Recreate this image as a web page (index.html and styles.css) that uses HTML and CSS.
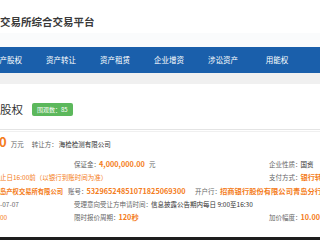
FILE: index.html
```html
<!DOCTYPE html>
<html lang="zh-CN">
<head>
    <meta charset="UTF-8">
    <meta name="viewport" content="width=device-width, initial-scale=1.0">
    <title>交易所综合交易平台</title>
    <link rel="stylesheet" href="styles.css">
</head>
<body>
    <div class="page">
        <header class="top">
            <div class="brand">交易所综合交易平台</div>
        </header>
        <div class="strip"></div>
        <nav class="nav">
            <ul>
                <li>资产股权</li>
                <li>资产转让</li>
                <li>资产租赁</li>
                <li>企业增资</li>
                <li>涉讼资产</li>
                <li>用能权</li>
                <li>更多</li>
            </ul>
        </nav>
        <div class="gap"></div>
        <main class="detail">
            <div class="head">
                <h2>股权</h2>
                <span class="badge">围观数：85</span>
            </div>
            <div class="price-row">
                <span class="amount">0</span>
                <span class="unit">万元</span>
                <span class="k seller-k">转让方：</span>
                <span class="seller">海检检测有限公司</span>
            </div>
            <div class="info">
                <div class="row">
                    <div class="cell-a"></div>
                    <div class="cell-b"><span class="k">保证金：</span><span class="v hot">4,000,000.00</span><span class="k yuan">元</span></div>
                    <div class="cell-c"><span class="k">企业性质：</span><span class="v">国资</span></div>
                </div>
                <div class="row">
                    <div class="cell-ab warn">止日16:00前（以银行到账时间为准）</div>
                    <div class="cell-c"><span class="k">支付方式：</span><span class="v hot">银行转账</span></div>
                </div>
                <div class="row">
                    <div class="acct-name hot">岛产权交易所有限公司</div>
                    <div class="acct-no"><span class="k">账号：</span><span class="v hot">53296524851071825069300</span></div>
                    <div class="bank"><span class="k">开户行：</span><span class="v hot">招商银行股份有限公司青岛分行</span></div>
                </div>
                <div class="row">
                    <div class="cell-a muted">-07-07</div>
                    <div class="cell-bc"><span class="k">受理意向受让方申请时间：</span><span class="v">信息披露公告期内每日 9:00至16:30</span></div>
                </div>
                <div class="row">
                    <div class="cell-a warn">00</div>
                    <div class="cell-b"><span class="k">限时报价周期：</span><span class="v hot">120秒</span></div>
                    <div class="cell-c"><span class="k">加价幅度：</span><span class="v hot">10.00</span></div>
                </div>
            </div>
        </main>
        <div class="bottom-bar"></div>
    </div>
</body>
</html>
```

FILE: styles.css
```css
* {
    box-sizing: border-box;
}
body {
    margin: 0;
    padding: 0;
    font-family: "Noto Sans CJK SC", "Noto Sans", sans-serif;
    color: #333;
    background-color: #ffffff;
}
.page {
    width: 320px;
    height: 240px;
    overflow: hidden;
    display: flex;
    flex-direction: column;
}
.top {
    height: 33px;
    padding-top: 15px;
    background-color: #ffffff;
}
.brand {
    font-size: 10.5px;
    line-height: 14px;
    font-weight: bold;
    color: #3a3a3a;
    white-space: nowrap;
}
.strip {
    height: 14px;
    background-color: #fafbfc;
}
.nav {
    height: 26px;
    background-color: #1a5fab;
}
.nav ul {
    list-style: none;
    margin: 0 0 0 -20px;
    padding: 0;
    display: flex;
}
.nav li {
    flex: 0 0 54px;
    text-align: center;
    font-size: 7.5px;
    line-height: 26px;
    color: #ffffff;
    white-space: nowrap;
}
.gap {
    height: 11px;
    background-color: #f0f0f0;
}
.detail {
    flex: 1;
    background-color: #ffffff;
}
.head {
    height: 46px;
    padding-top: 19px;
    display: flex;
    align-items: flex-start;
    gap: 9px;
    border-bottom: 1px solid #e4e4e4;
}
.head h2 {
    margin: 0;
    font-size: 11.5px;
    line-height: 13px;
    font-weight: normal;
    color: #333;
}
.badge {
    height: 13px;
    padding: 0 5px;
    background-color: #5cb85c;
    border-radius: 2px;
    color: #ffffff;
    font-size: 6px;
    line-height: 13px;
    white-space: nowrap;
}
.price-row {
    margin-top: 1px;
    height: 21px;
    border-top: 1px solid #f0f0f0;
    display: flex;
    align-items: baseline;
    white-space: nowrap;
    font-size: 6.5px;
    line-height: 20px;
}
.amount {
    margin-left: -1px;
    font-size: 13px;
    font-weight: bold;
    color: #f47c20;
}
.unit {
    margin-left: 4px;
    color: #666;
}
.seller-k {
    margin-left: 8px;
}
.seller {
    margin-left: 1px;
    color: #333;
}
.info {
    padding-top: 6px;
    font-size: 6.5px;
}
.row {
    display: flex;
    align-items: baseline;
    height: 13.3px;
    line-height: 13.3px;
    white-space: nowrap;
}
.cell-a {
    flex: 0 0 74px;
}
.cell-b {
    flex: 0 0 194px;
}
.cell-ab {
    flex: 0 0 268px;
}
.cell-bc {
    flex: 1;
}
.cell-c {
    flex: 1;
    padding-left: 1px;
}
.acct-name {
    flex: 0 0 68px;
}
.acct-no {
    flex: 0 0 127px;
}
.bank {
    flex: 1;
}
.k {
    color: #666;
}
.v {
    margin-left: -1px;
    color: #333;
}
.hot {
    color: #f47c20;
    font-weight: bold;
    font-size: 7.3px;
}
.acct-name.hot {
    font-size: 6.3px;
}
.yuan {
    margin-left: 4px;
}
.warn {
    color: #f47c20;
}
.muted {
    color: #666;
}
.bottom-bar {
    height: 3px;
    background-color: #1e1e1e;
}
```
